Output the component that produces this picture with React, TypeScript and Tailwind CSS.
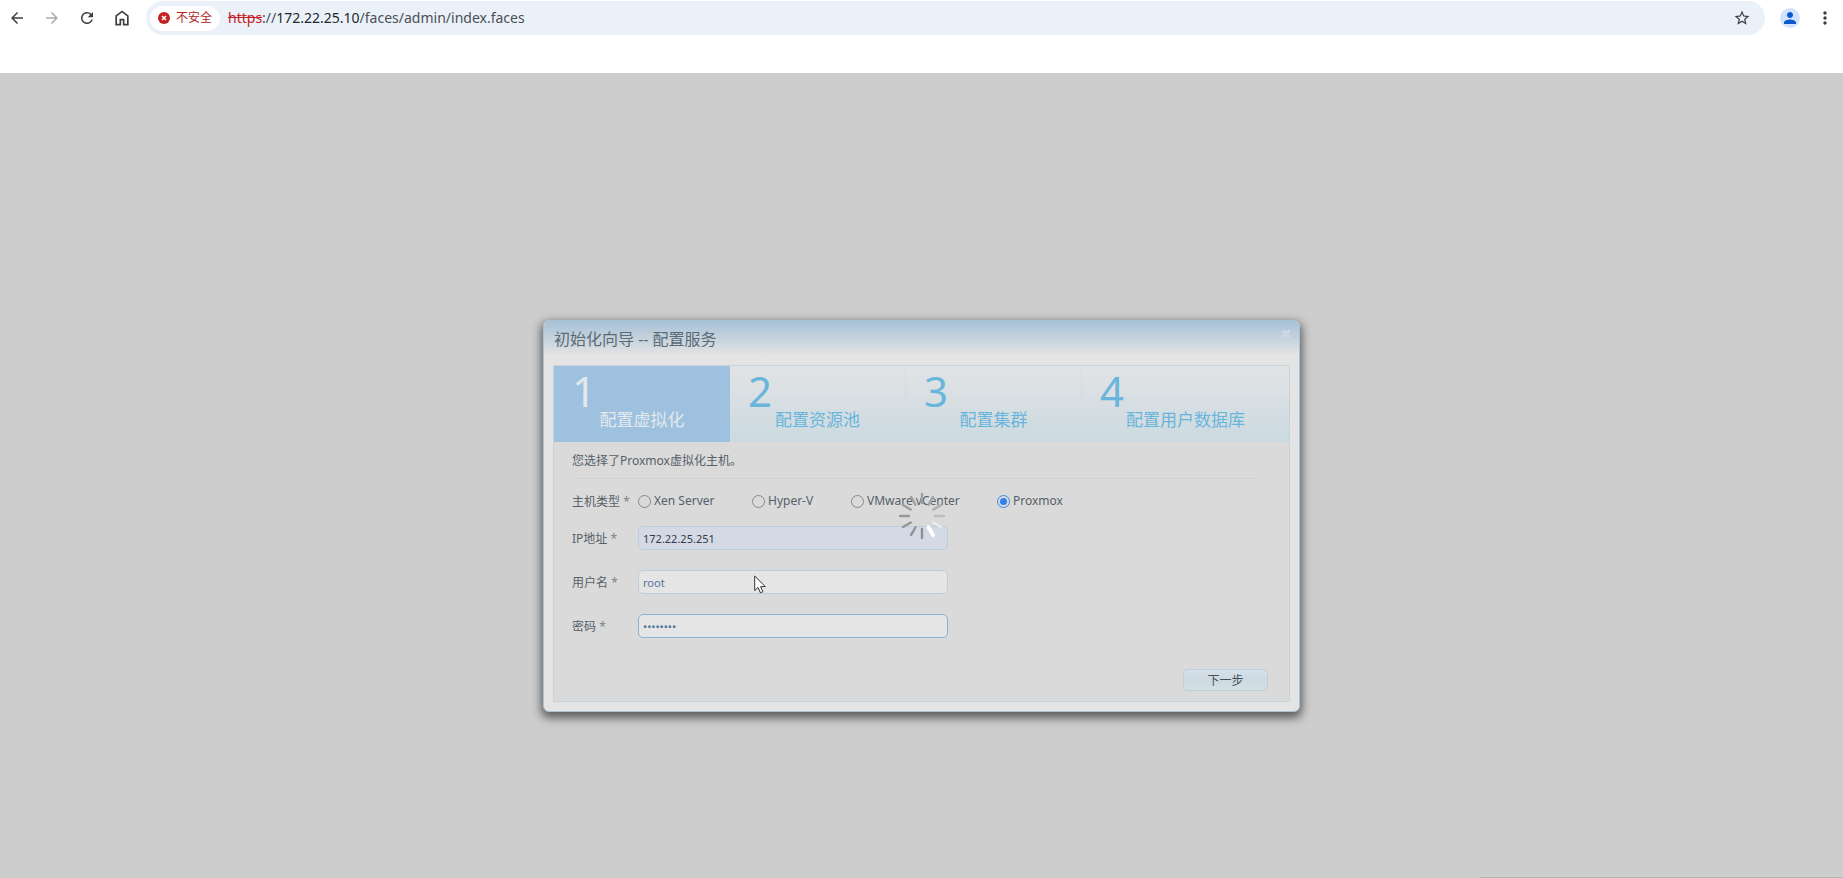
import clsx from "clsx";
import React from "react";
import {
	MdArrowBack,
	MdArrowForward,
	MdMoreVert,
	MdPerson,
	MdRefresh,
	MdStarBorder,
} from "react-icons/md";

const steps = ["配置虚拟化", "配置资源池", "配置集群", "配置用户数据库"];

const hostTypes = [
	{ name: "Xen Server", width: "w-[114px]" },
	{ name: "Hyper-V", width: "w-[99px]" },
	{ name: "VMware vCenter", width: "w-[146px]" },
	{ name: "Proxmox", width: "" },
];

function HomeIcon() {
	return (
		<svg viewBox="0 -960 960 960" className="size-5" fill="currentColor">
			<path d="M240-200h120v-240h240v240h120v-360L480-740 240-560v360Zm-80 80v-480l320-240 320 240v480H520v-240h-80v240H160Z" />
		</svg>
	);
}

function BrowserBar() {
	return (
		<header className="flex h-[73px] items-start bg-white pt-px pr-2 pl-[7px] font-['Noto_Sans','Noto_Sans_CJK_SC',sans-serif] text-[#3c4043]">
			<div className="flex h-[33px] items-center gap-[15px]">
				<button aria-label="后退">
					<MdArrowBack className="size-5 p-px" />
				</button>
				<button aria-label="前进" className="text-[#a9abae]">
					<MdArrowForward className="size-5 p-px" />
				</button>
				<button aria-label="重新加载">
					<MdRefresh className="size-5 p-px" />
				</button>
				<button aria-label="主页">
					<HomeIcon />
				</button>
			</div>
			<div className="ml-[14px] flex h-[34px] flex-1 items-center rounded-full bg-[#eaf1f9] pr-[14px] pl-1">
				<button className="flex h-[25px] items-center gap-1.5 rounded-full bg-white px-2 text-xs text-[#b3261e]">
					<svg viewBox="0 0 12 12" className="size-3">
						<circle cx="6" cy="6" r="6" fill="#c5221f" />
						<path d="M4 4l4 4M8 4l-4 4" stroke="#fff" strokeWidth="1.6" />
					</svg>
					不安全
				</button>
				<div className="ml-2 flex-1 text-sm text-[#4a4f55]">
					<span className="text-[#c5221f] line-through">https</span>://
					<span className="text-[#24272b]">172.22.25.10</span>
					/faces/admin/index.faces
				</div>
				<button aria-label="收藏">
					<MdStarBorder className="size-[18px]" />
				</button>
			</div>
			<div className="ml-[15px] flex h-[34px] items-center gap-[15px]">
				<button
					aria-label="个人资料"
					className="flex size-5 items-center justify-center rounded-full bg-[#d3e3fd] text-[#0b57d0]"
				>
					<MdPerson className="size-[18px]" />
				</button>
				<button aria-label="菜单">
					<MdMoreVert className="size-5" />
				</button>
			</div>
		</header>
	);
}

function Step({ index, label }: { index: number; label: string }) {
	const active = index === 0;
	return (
		<li
			className={clsx(
				"flex h-[76px] flex-col",
				index < 3 ? "w-[176px]" : "flex-1",
				active
					? "bg-[#9dc1de] text-[#e3e8ed]"
					: "bg-linear-to-b from-[#e2e3e5] to-[#cbdae0] text-[#69b5db]",
				(index === 1 || index === 2) && "border-r border-[#d5dce1]",
			)}
		>
			<span className="pt-[5px] pl-[18px] text-[42px] leading-10">
				{index + 1}
			</span>
			<span className="pt-px text-center text-[17px] leading-4">{label}</span>
		</li>
	);
}

function Row({
	label,
	htmlFor,
	children,
}: {
	label: string;
	htmlFor: string;
	children: React.ReactNode;
}) {
	return (
		<div className="flex h-6 items-center">
			<label htmlFor={htmlFor} className="w-[66px] shrink-0 pt-0.5">
				{label} <span className="text-[#7d858c]">*</span>
			</label>
			{children}
		</div>
	);
}

const inputStyle =
	"h-6 w-[310px] rounded-[5px] border px-1 text-[11px] outline-none";

// twelve spokes, clockwise from the top
const spokes = [
	"#a0a0a0",
	"#a3a3a3",
	"#acacac",
	"#bcbcbc",
	"#ececec",
	"#ffffff",
	"#909090",
	"#929292",
	"#959595",
	"#989898",
	"#9b9b9b",
	"#9e9e9e",
];

function Spinner() {
	return (
		<svg
			viewBox="-24 -24 48 48"
			className="absolute top-1/2 left-1/2 size-12 -translate-x-1/2 -translate-y-1/2"
		>
			{spokes.map((color, i) => (
				<line
					key={i}
					y1="-13"
					y2="-22"
					stroke={color}
					strokeWidth={i === 5 ? 4 : 2.4}
					strokeLinecap="round"
					transform={`rotate(${i * 30})`}
				/>
			))}
		</svg>
	);
}

function Wizard() {
	return (
		<section className="relative w-[757px] rounded-md border border-[#a9c4d6] bg-[#e4e4e4] px-[9px] pb-[9px] shadow-[0_4px_10px_2px_rgba(0,0,0,0.55)]">
			<div className="-mx-[9px] flex h-[35px] items-start justify-between rounded-t-[5px] bg-linear-to-b from-[#a7c1d6] to-[#e4e4e4] pr-2 pl-[10px]">
				<h1 className="pt-1.5 text-base leading-6 text-[#5b6a74]">
					初始化向导 -- 配置服务
				</h1>
				<button aria-label="关闭" className="pt-2 text-[#ccd9e4]">
					<svg viewBox="0 0 10 10" className="size-[10px]">
						<path
							d="M1.5 1.5l7 7M8.5 1.5l-7 7"
							stroke="currentColor"
							strokeWidth="3"
						/>
					</svg>
				</button>
			</div>
			<div className="mt-[9px] border border-[#c5d3dc] bg-[#dadada]">
				<ol className="flex">
					{steps.map((label, i) => (
						<Step key={label} index={i} label={label} />
					))}
				</ol>
				<form className="pr-[21px] pb-[10px] pl-[18px] text-xs text-[#566069]">
					<p className="mr-2.5 border-b border-[#d0d2d3] pt-[10px] pb-2 leading-[18px]">
						您选择了Proxmox虚拟化主机。
					</p>
					<div className="mt-[10px]">
						<Row label="主机类型" htmlFor="host-0">
							{hostTypes.map(({ name, width }, i) => (
								<label
									key={name}
									className={clsx("flex items-center gap-[3px]", width)}
								>
									<input
										id={`host-${i}`}
										type="radio"
										name="host"
										defaultChecked={name === "Proxmox"}
										className={clsx(
											"flex size-[13px] appearance-none items-center justify-center rounded-full border border-[#85898c]",
											"checked:border-[#3b87e8] checked:before:size-[7px] checked:before:rounded-full checked:before:bg-[#2f80ea]",
										)}
									/>
									{name}
								</label>
							))}
						</Row>
					</div>
					<div className="mt-[13px] flex flex-col gap-5">
						<Row label="IP地址" htmlFor="ip">
							<input
								id="ip"
								defaultValue="172.22.25.251"
								className={clsx(
									inputStyle,
									"border-[#bccedc] bg-[#d3dae5] text-[#333b45]",
								)}
							/>
						</Row>
						<Row label="用户名" htmlFor="user">
							<input
								id="user"
								defaultValue="root"
								className={clsx(
									inputStyle,
									"border-[#bccedc] bg-[#e5e5e5] text-[#56759a]",
								)}
							/>
						</Row>
						<Row label="密码" htmlFor="password">
							<input
								id="password"
								type="password"
								defaultValue="password"
								className={clsx(
									inputStyle,
									"border-[#86b5d3] bg-[#e5e5e5] text-[#4a7399]",
								)}
							/>
						</Row>
					</div>
					<div className="mt-[31px] flex justify-end">
						<button
							type="button"
							className="h-[22px] w-[85px] rounded border border-[#bccfdc] bg-linear-to-b from-[#d8e0e9] via-[#cddae3] to-[#d5e0e5] pt-0.5 text-xs leading-[18px] text-[#46525c]"
						>
							下一步
						</button>
					</div>
				</form>
			</div>
			<Spinner />
		</section>
	);
}

export default function App() {
	return (
		<div className="flex min-h-screen flex-col">
			<BrowserBar />
			<main className="relative flex flex-1 flex-col items-center overflow-hidden bg-[#cdcdcd] pt-[247px] font-['Noto_Sans','Noto_Sans_CJK_SC',sans-serif]">
				<Wizard />
				<svg
					viewBox="0 0 12 19"
					className="absolute top-[502px] left-1/2 -ml-[168px] h-[19px] w-3"
				>
					<path
						d="M.7 1v14.6l3.4-3.2 2.3 5.4 2.5-1.1-2.3-5.1h4.7z"
						fill="#fff"
						stroke="#333"
					/>
				</svg>
				<div className="mt-auto h-px w-[363px] self-end bg-[#b5b5b5]" />
			</main>
		</div>
	);
}
